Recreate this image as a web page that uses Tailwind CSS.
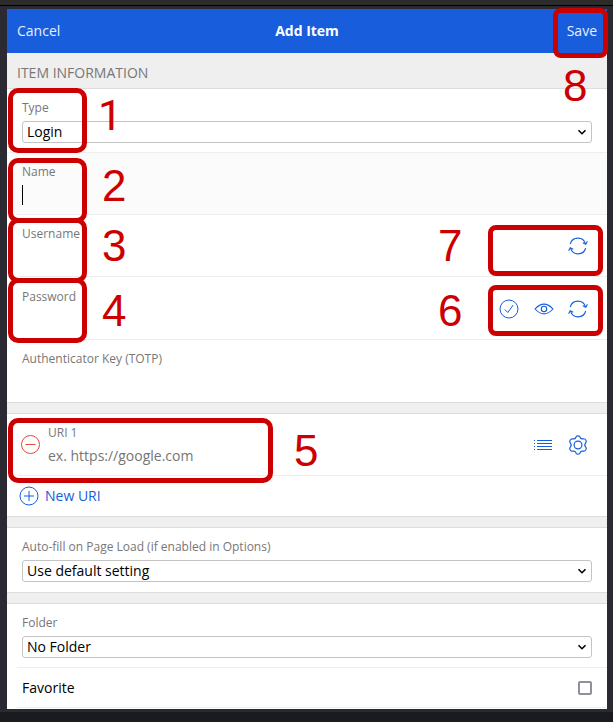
<!DOCTYPE html>
<html lang="en">
<head>
<meta charset="utf-8">
<title>Add Item</title>
<script src="https://cdn.jsdelivr.net/npm/@tailwindcss/browser@4"></script>
</head>
<body class="relative h-[722px] w-[613px] overflow-hidden bg-[#1a1b1f] font-['Open_Sans',sans-serif] text-[14px] leading-5 text-black">
<svg class="hidden">
  <symbol id="refresh" viewBox="0 0 20 20"><g fill="none" stroke="currentColor" stroke-width="1.1"><path d="M2.300 8A7.900 7.900 0 0 1 17.500 7.800M17.700 12A7.900 7.900 0 0 1 2.500 12.200"/><path d="M14.800 6.700L17.800 8.300L19.400 5.300M5.200 13.300L2.200 11.700L.6 14.700"/></g></symbol>
  <symbol id="chev" viewBox="0 0 10 8"><path d="M1.500 2.200l3.500 3.500 3.500-3.500" fill="none" stroke="#000" stroke-width="1.6"/></symbol>
</svg>
<div class="h-[5px] bg-[#2b2b2b]"></div>
<div class="h-px bg-black"></div>
<div class="h-[706px] bg-[#2b2a33] pt-[3px] pr-[6px] pl-[7px]">
  <main class="flex h-[700px] flex-col bg-white">
    <header class="flex h-11 shrink-0 items-center justify-between bg-[#175ddc] px-[10px] text-white">
      <span class="w-20 text-[#e8effc]">Cancel</span><h1 class="font-bold">Add Item</h1><span class="w-20 text-right text-[#e8effc]">Save</span>
    </header>
    <div class="flex h-9 shrink-0 items-center border-b border-[#dcdcdc] bg-[#efefef] px-[10px] pt-1 text-[#777]">ITEM INFORMATION</div>
    <div class="h-16 shrink-0 border-b border-[#eee] px-[15px] pt-[10px]">
      <div class="text-[12px] leading-[18px] text-[#777]">Type</div>
      <div class="mt-1 flex h-[22px] items-center justify-between rounded-[3px] border border-[#c4c4c4] pr-1 pl-1"><span>Login</span><svg class="h-2 w-[10px]"><use href="#chev"/></svg></div>
    </div>
    <div class="h-[62px] shrink-0 bg-[#fbfbfb] pl-[10px]">
      <div class="h-full border-b border-[#eee] pt-[10px] pl-[5px]"><div class="text-[12px] leading-[18px] text-[#777]">Name</div><div class="mt-1 h-5 w-px bg-black"></div></div>
    </div>
    <div class="h-[62px] shrink-0 pl-[10px]">
      <div class="flex h-full items-center justify-between border-b border-[#eee] pr-[19px] pl-[5px]"><div class="self-start pt-[10px] text-[12px] leading-[18px] text-[#777]">Username</div><svg class="h-5 w-5 text-[#175ddc]"><use href="#refresh"/></svg></div>
    </div>
    <div class="h-[63px] shrink-0 pl-[10px]">
      <div class="flex h-full items-center border-b border-[#eee] pr-[19px] pl-[5px] text-[#175ddc]"><div class="mr-auto self-start pt-[11px] text-[12px] leading-[18px] text-[#777]">Password</div>
        <svg class="mt-px mr-[15px] h-5 w-5" viewBox="0 0 20 20" fill="none" stroke="currentColor"><circle cx="10" cy="10" r="9"/><path d="M5.800 10.500l3 3 5.400-7.500"/></svg>
        <svg class="mt-px mr-[14px] h-5 w-5" viewBox="0 0 20 20" fill="none" stroke="currentColor" stroke-width="1.1"><path d="M1 10q9-9.800 18 0q-9 9.800-18 0z"/><circle cx="10" cy="10" r="2.700"/></svg>
        <svg class="mt-px h-5 w-5"><use href="#refresh"/></svg>
      </div>
    </div>
    <div class="h-[63px] shrink-0 border-b border-[#dcdcdc] pt-[10px] pl-[15px] text-[12px] leading-[18px] text-[#777]">Authenticator Key (TOTP)</div>
    <div class="h-[11px] shrink-0 border-b border-[#dcdcdc] bg-[#efefef]"></div>
    <div class="h-[62px] shrink-0 pl-[10px]">
      <div class="flex h-full items-center border-b border-[#eee] pr-[19px] pl-[3px] text-[#175ddc]">
        <svg class="mr-2 h-5 w-5 text-[#dd4b39]" viewBox="0 0 20 20" fill="none" stroke="currentColor"><circle cx="10.500" cy="9.500" r="9"/><path d="M5.500 9.500h10"/></svg>
        <div class="mr-auto self-start pt-[10px] text-[#777]"><div class="text-[12px] leading-[18px]">URI 1</div><div class="mt-1 text-[#757575]">ex. https://google.com</div></div>
        <svg class="mr-[15px] h-5 w-5" viewBox="0 0 20 20" fill="none" stroke="currentColor"><path d="M4 5.500h15M4 8.500h15M4 11.500h15M4 14.500h15"/><path d="M1 5.500h1M1 8.500h1M1 11.500h1M1 14.500h1"/></svg>
        <svg class="h-5 w-5" viewBox="0 0 20 20" fill="none" stroke="currentColor" stroke-width="1.2"><circle cx="10" cy="10" r="3.900"/><path d="M7.800 2.500Q8 .8 10 .8T12.200 2.500Q13 4.500 15.400 3.800Q16.900 3.500 17.900 5.300T17.600 8Q16 10 17.600 12Q18.900 13 17.900 14.700T15.400 16.200Q13 15.500 12.200 17.500Q12 19.200 10 19.200T7.800 17.500Q7 15.500 4.600 16.200Q3.100 16.500 2.100 14.700T2.400 12Q4 10 2.400 8Q1.100 7 2.100 5.300T4.600 3.800Q7 4.500 7.800 2.500z"/></svg>
      </div>
    </div>
    <div class="flex h-[41px] shrink-0 items-center border-b border-[#dcdcdc] pl-3 text-[#175ddc]"><svg class="mr-[6px] h-5 w-5" viewBox="0 0 20 20" fill="none" stroke="currentColor"><circle cx="10" cy="10" r="9"/><path d="M5 10h10M10 5v10"/></svg>New URI</div>
    <div class="h-[11px] shrink-0 border-b border-[#dcdcdc] bg-[#efefef]"></div>
    <div class="h-[65px] shrink-0 border-b border-[#dcdcdc] px-[15px] pt-[10px]">
      <div class="text-[12px] leading-[18px] text-[#777]">Auto-fill on Page Load (if enabled in Options)</div>
      <div class="mt-1 flex h-[22px] items-center justify-between rounded-[3px] border border-[#c4c4c4] pr-1 pl-1"><span>Use default setting</span><svg class="h-2 w-[10px]"><use href="#chev"/></svg></div>
    </div>
    <div class="h-[11px] shrink-0 border-b border-[#dcdcdc] bg-[#efefef]"></div>
    <div class="h-16 shrink-0 pl-[10px]">
      <div class="h-full border-b border-[#eee] pt-[10px] pr-[15px] pl-[5px]">
      <div class="text-[12px] leading-[18px] text-[#777]">Folder</div>
      <div class="mt-1 flex h-[22px] items-center justify-between rounded-[3px] border border-[#c4c4c4] pr-1 pl-1"><span>No Folder</span><svg class="h-2 w-[10px]"><use href="#chev"/></svg></div></div>
    </div>
    <div class="h-10 shrink-0 pl-[10px]"><div class="flex h-full items-center justify-between border-b border-[#eee] pr-[15px] pl-[5px]"><span>Favorite</span><span class="h-[14px] w-[14px] rounded-[2px] border-2 border-[#8f8f9d]"></span></div></div>
  </main>
</div>
<!-- Numbered callouts -->
<div class="font-['Liberation_Sans',sans-serif] text-[44px] leading-[44px] text-[#c00]">
  <div class="absolute top-[88px] left-[8px] h-[65px] w-[79px] rounded-[10px] border-5 border-[#c00]"></div>
  <div class="absolute top-[158px] left-[8px] h-[65px] w-[79px] rounded-[10px] border-5 border-[#c00]"></div>
  <div class="absolute top-[218px] left-[8px] h-[65px] w-[79px] rounded-[10px] border-5 border-[#c00]"></div>
  <div class="absolute top-[278px] left-[8px] h-[65px] w-[79px] rounded-[10px] border-5 border-[#c00]"></div>
  <div class="absolute top-[418px] left-[8px] h-[65px] w-[265px] rounded-[10px] border-5 border-[#c00]"></div>
  <div class="absolute top-[285px] left-[488px] h-[51px] w-[115px] rounded-[8px] border-5 border-[#c00]"></div>
  <div class="absolute top-[225px] left-[488px] h-[51px] w-[115px] rounded-[8px] border-5 border-[#c00]"></div>
  <div class="absolute top-[8px] left-[553px] h-[50px] w-[55px] rounded-[8px] border-5 border-[#c00]"></div>
  <span class="absolute top-[93px] left-[98px] font-[Roboto,sans-serif] text-[43px]">1</span>
  <span class="absolute top-[164px] left-[102px]">2</span>
  <span class="absolute top-[224px] left-[102px]">3</span>
  <span class="absolute top-[289px] left-[102px]">4</span>
  <span class="absolute top-[429px] left-[294px]">5</span>
  <span class="absolute top-[289px] left-[438px]">6</span>
  <span class="absolute top-[224px] left-[438px]">7</span>
  <span class="absolute top-[64px] left-[563px]">8</span>
</div>
</body>
</html>
